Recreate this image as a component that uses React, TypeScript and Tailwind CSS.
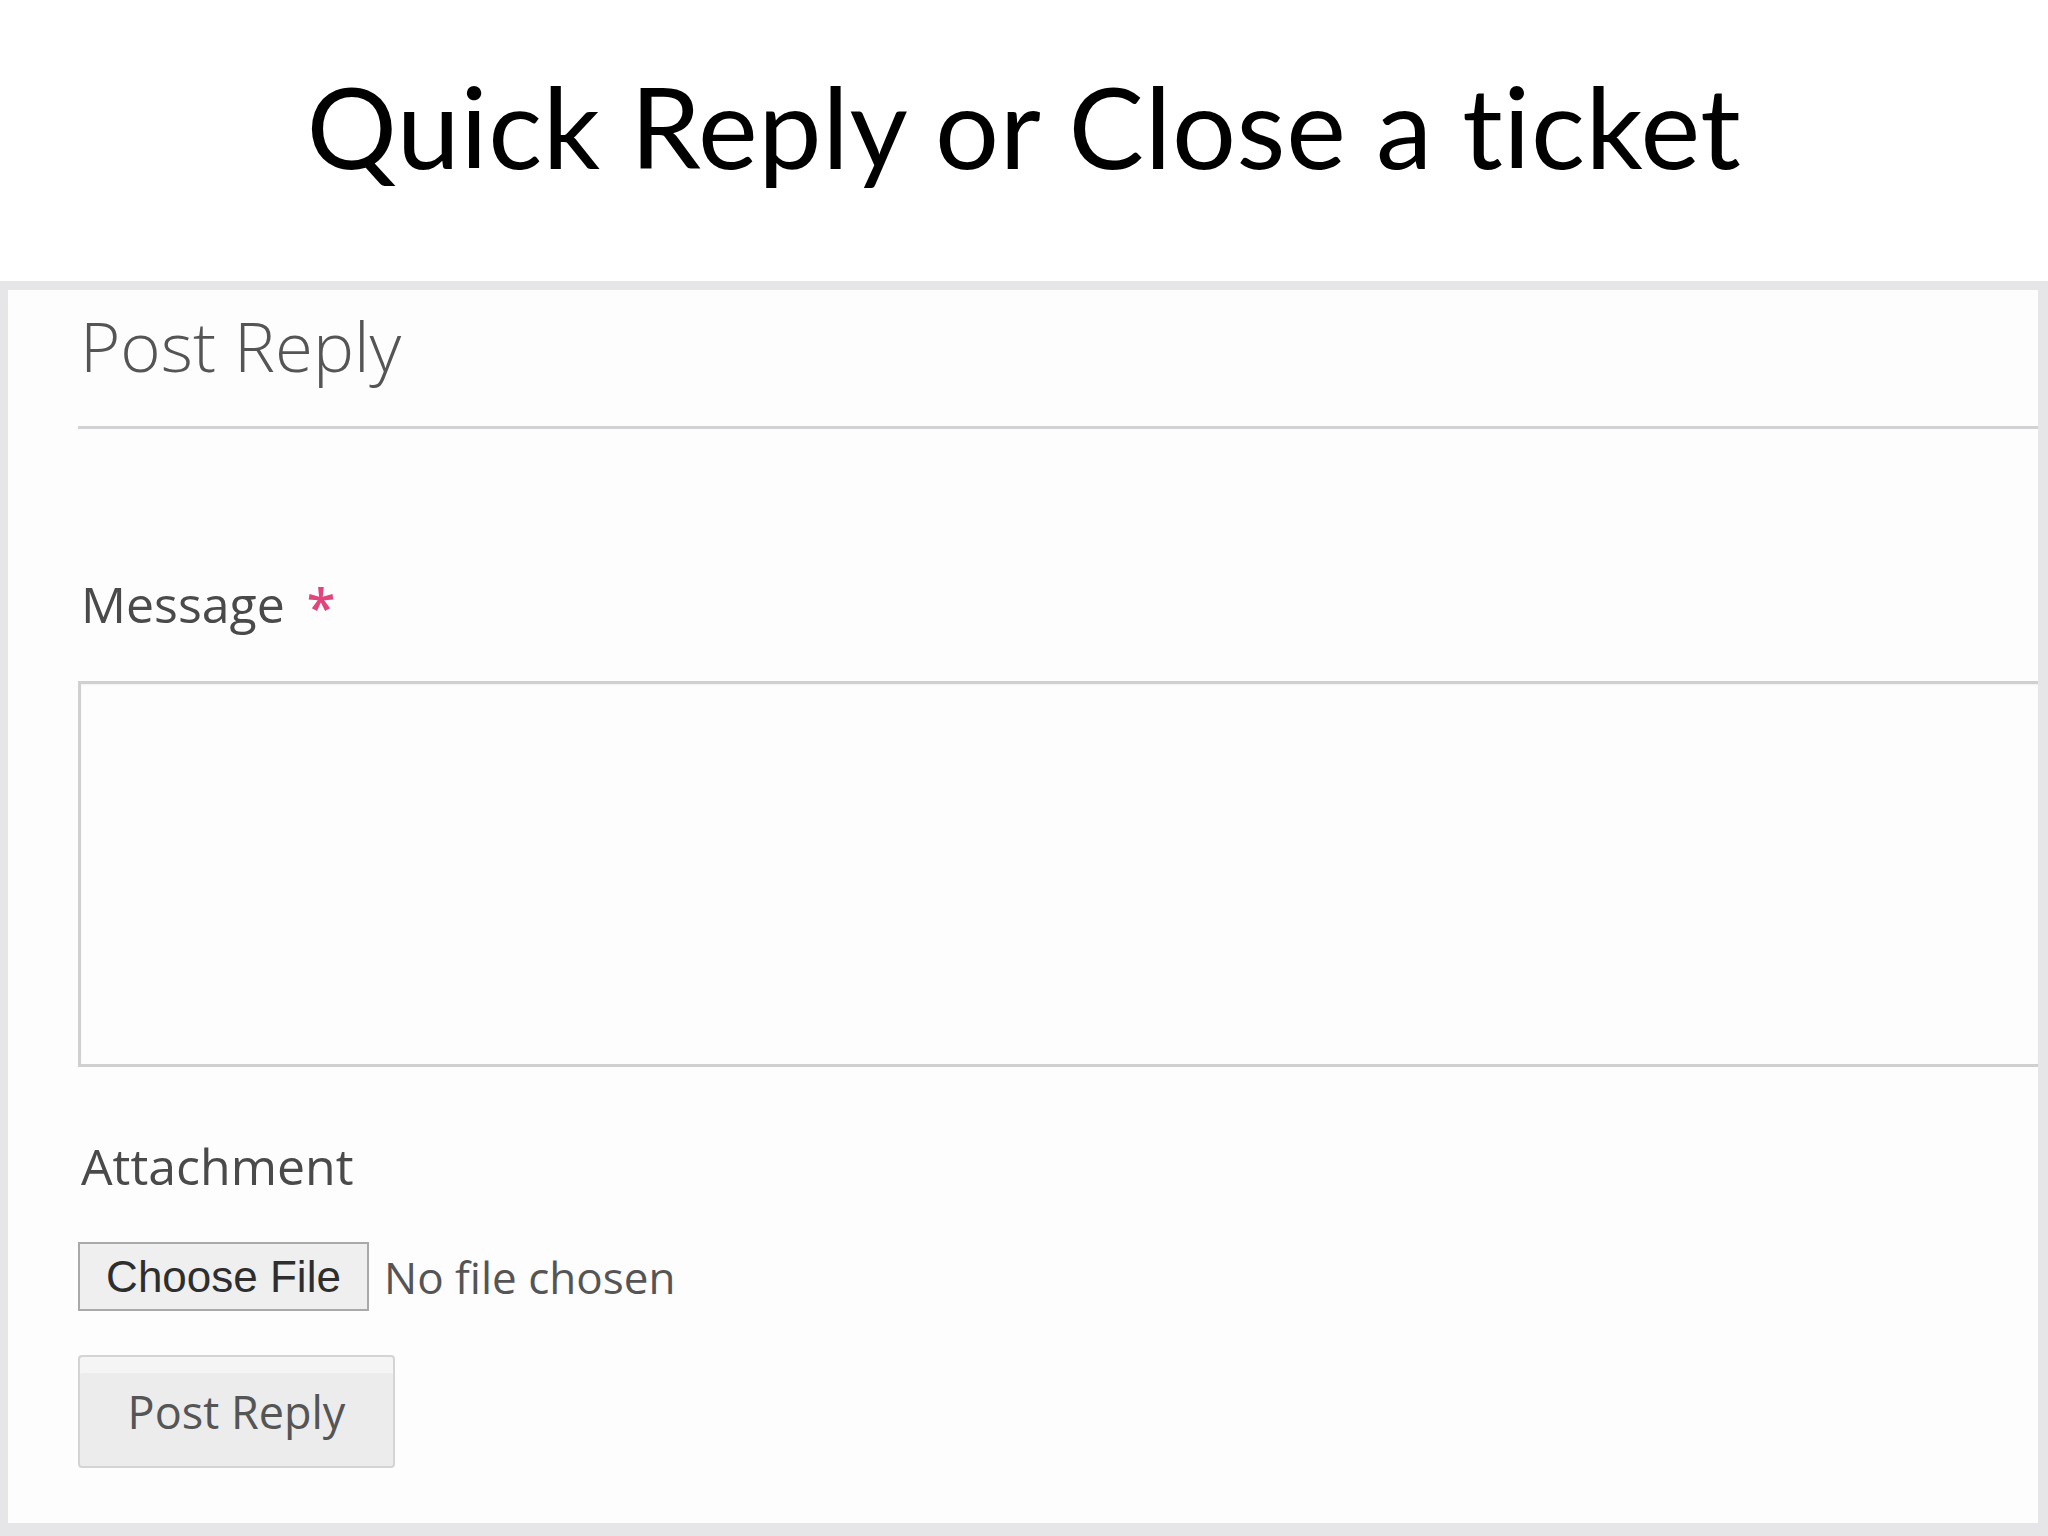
import { useState } from "react";

export default function App() {
  const [message, setMessage] = useState("");

  return (
    <div className="w-[2048px] h-[1536px] bg-white flex flex-col overflow-hidden">
      <div className="h-[281px] pt-[69px] flex justify-center shrink-0">
        <h1 className="text-[113px] leading-none text-black font-['Lato',sans-serif] tracking-[0.6px] [font-variant-ligatures:none]">
          Quick Reply or Close a ticket
        </h1>
      </div>

      <section className="flex-1 bg-[#fdfdfe] border-l-[8px] border-t-[9px] border-r-[10px] border-b-[13px] border-[#e6e6e8] pl-[70px] font-['Open_Sans',sans-serif]">
        <div className="pt-[21px] pb-[46px] border-b-[3px] border-[#d2d2d4]">
          <h2 className="text-[69px] leading-none font-light text-[#555555] pl-[2px]">Post Reply</h2>
        </div>

        <form onSubmit={(e) => e.preventDefault()} className="flex flex-col">
          <label className="mt-[150px] h-[50px] text-[50px] leading-none text-[#4a4a4a] pl-[3px] flex items-start">
            Message
            <span className="ml-[22px] mt-[2px] text-[#e0457b] text-[52px] font-semibold leading-none">*</span>
          </label>
          <textarea
            value={message}
            onChange={(e) => setMessage(e.target.value)}
            className="mt-[52px] h-[386px] w-full resize-none outline-none bg-[#fdfdfe] border-[3px] border-r-0 border-[#d0d0d2] shadow-[inset_0_1px_2px_rgba(0,0,0,0.05)] p-3 text-[40px] text-[#444]"
          />

          <span className="mt-[74px] text-[50px] leading-none text-[#4a4a4a] pl-[3px]">Attachment</span>

          <div className="mt-[51px] flex items-center gap-[15px]">
            <button
              type="button"
              className="h-[69px] w-[291px] bg-[#efefef] border-2 border-[#a9a9a9] text-[44px] leading-none text-[#2e2e2e] font-['Liberation_Sans',sans-serif] flex items-center justify-center"
            >
              Choose File
            </button>
            <span className="text-[44px] leading-none text-[#555]">No file chosen</span>
          </div>

          <div className="mt-[44px]">
            <button
              type="submit"
              className="h-[113px] w-[317px] bg-[#ececed] border-2 border-[#d4d4d6] rounded-[4px] shadow-[inset_0_16px_0_#f5f5f6] text-[45px] leading-none text-[#555] flex items-center justify-center"
            >
              Post Reply
            </button>
          </div>
        </form>
      </section>
    </div>
  );
}
